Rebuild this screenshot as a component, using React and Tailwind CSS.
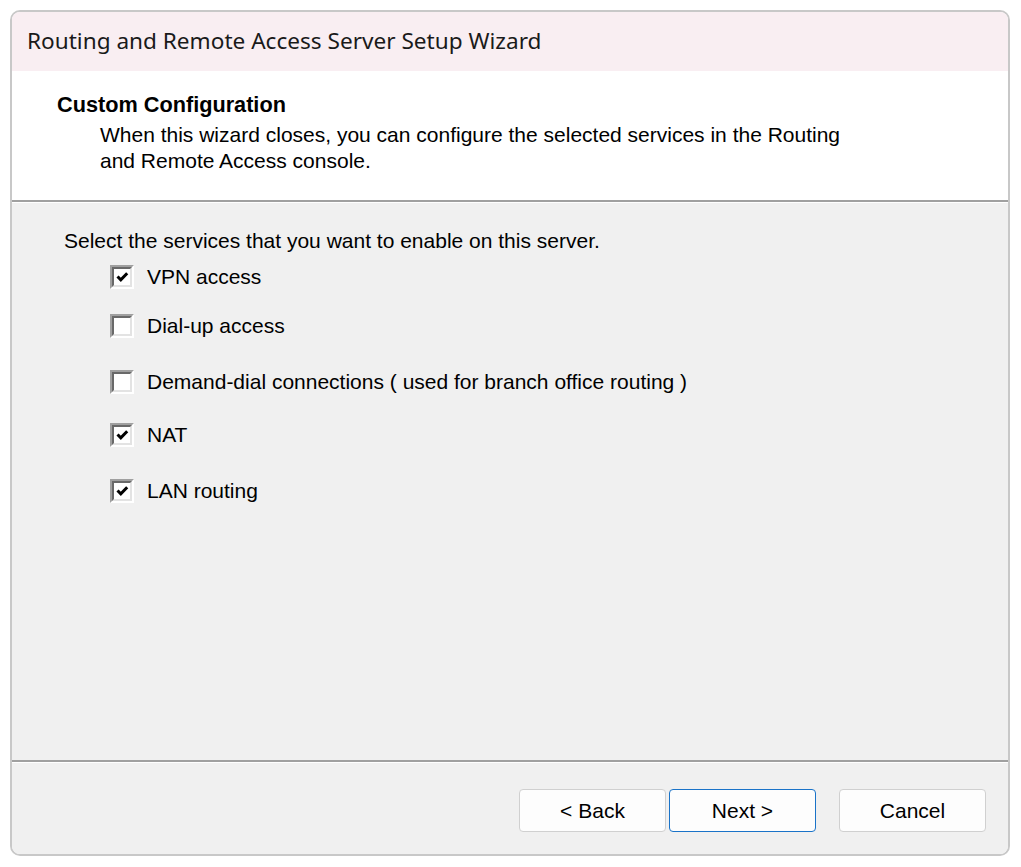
import React, { useState } from 'react';

const services = [
  { id: 'vpn', label: 'VPN access', checked: true, mt: 'mt-[12px]' },
  { id: 'dial', label: 'Dial-up access', checked: false, mt: 'mt-[25px]' },
  { id: 'demand', label: 'Demand-dial connections ( used for branch office routing )', checked: false, mt: 'mt-[32px]' },
  { id: 'nat', label: 'NAT', checked: true, mt: 'mt-[29px]' },
  { id: 'lan', label: 'LAN routing', checked: true, mt: 'mt-[32px]' },
];

// classic sunken 3D checkbox
const Checkbox = ({ checked, onClick }) => (
  <button
    onClick={onClick}
    className="w-[24px] h-[24px] shrink-0 border-2 border-t-[#a0a0a0] border-l-[#a0a0a0] border-b-white border-r-white"
  >
    <div className="w-full h-full border-2 border-t-[#696969] border-l-[#696969] border-b-[#e3e3e3] border-r-[#e3e3e3] bg-white flex items-center justify-center">
      {checked && (
        <svg width="13" height="12" viewBox="0 0 13 12" className="shrink-0 min-w-[13px]">
          <polyline points="1.5,5.5 4.8,8.8 11.2,2.2" fill="none" stroke="#000" strokeWidth="3" />
        </svg>
      )}
    </div>
  </button>
);

const Button = ({ children, primary }) => (
  <button
    className={`w-[147px] h-[43px] rounded-[4px] bg-[#fdfdfd] text-[21px] text-black ${primary ? 'border border-[#1a73c8]' : 'border border-[#d0d0d0]'}`}
  >
    {children}
  </button>
);

const App = () => {
  const [checked, setChecked] = useState(
    Object.fromEntries(services.map((s) => [s.id, s.checked]))
  );

  return (
    <div className="w-[1021px] h-[867px] bg-white p-[10px] font-['Liberation_Sans',Arial,sans-serif]">
      <div className="w-[1000px] h-[846px] border-2 border-[#c8c8c8] rounded-[10px] overflow-hidden flex flex-col">
        {/* Title bar */}
        <div className="h-[59px] shrink-0 bg-[#f9eef2] flex items-center pl-[15px]">
          <span className="font-['Noto_Sans',sans-serif] text-[22.6px] text-[#1a1a1a] leading-none">
            Routing and Remote Access Server Setup Wizard
          </span>
        </div>

        {/* Header */}
        <div className="h-[129px] shrink-0 bg-white pl-[45px] pt-[22px]">
          <h1 className="text-[21.7px] font-bold leading-[24px] text-black">Custom Configuration</h1>
          <p className="ml-[43px] mt-[5px] text-[21px] leading-[26px] text-black">
            When this wizard closes, you can configure the selected services in the Routing
            <br />
            and Remote Access console.
          </p>
        </div>
        <div className="h-[2px] shrink-0 bg-[#a0a0a0]" />
        <div className="h-[1px] shrink-0 bg-white" />

        {/* Body */}
        <div className="flex-1 bg-[#f0f0f0] pl-[52px] pt-[26px]">
          <p className="text-[21px] leading-[24px] text-black">
            Select the services that you want to enable on this server.
          </p>
          <div className="pl-[46px] flex flex-col">
            {services.map((s) => (
              <label key={s.id} className={`flex items-center gap-[13px] ${s.mt}`}>
                <Checkbox
                  checked={checked[s.id]}
                  onClick={() => setChecked({ ...checked, [s.id]: !checked[s.id] })}
                />
                <span className="text-[21px] leading-[24px] text-black">{s.label}</span>
              </label>
            ))}
          </div>
        </div>

        <div className="h-[2px] shrink-0 bg-[#a0a0a0]" />
        <div className="h-[1px] shrink-0 bg-white" />

        {/* Footer */}
        <div className="h-[91px] shrink-0 bg-[#f0f0f0] flex items-start justify-end pt-[26px] pr-[22px]">
          <div className="flex gap-[3px]">
            <Button>&lt; Back</Button>
            <Button primary>Next &gt;</Button>
          </div>
          <div className="ml-[23px]">
            <Button>Cancel</Button>
          </div>
        </div>
      </div>
    </div>
  );
};

export default App;
